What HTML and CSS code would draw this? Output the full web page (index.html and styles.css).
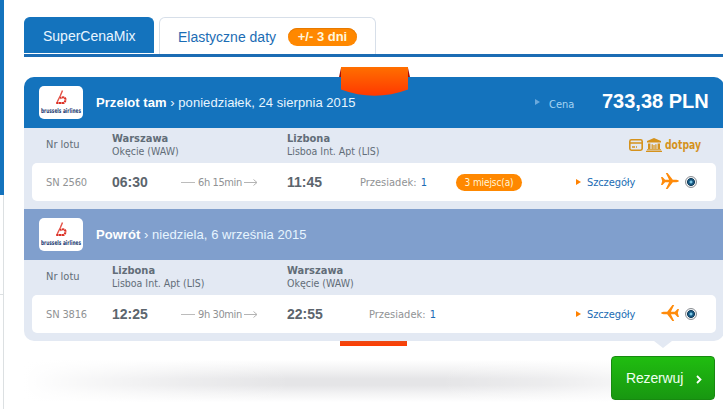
FILE: index.html
```html
<!DOCTYPE html>
<html lang="pl">
<head>
    <meta charset="utf-8">
    <title>Wyniki lotów</title>
    <link rel="stylesheet" href="styles.css">
</head>
<body>
    <svg width="0" height="0" class="defs">
        <symbol id="plane" viewBox="0 0 18 16">
            <path d="M0 4h1.5l2.6 2.8h4L4.8 0h1.8l5.2 6.8h3.6q2.4.5 2.6 1.2-.2.7-2.6 1.2h-3.6L6.6 16H4.8l3.3-6.8h-4L1.5 12H0l1.2-4z"/>
        </symbol>
        <symbol id="arrow" viewBox="0 0 14 8">
            <path d="M0 4.5h13M9.5 1.5l3.5 3-3.5 3" fill="none" stroke="#b4b4b4"/>
        </symbol>
        <symbol id="airline" viewBox="0 0 44 33">
            <path d="M23.5 4.5l-2.3 5.5-3 6" fill="none" stroke="#e4574c" stroke-width="1.5"/>
            <path d="M17.2 17h7.4q3-2.8 1.4-4.8-2-1.8-4.8.2" fill="none" stroke="#dc3025" stroke-width="2" stroke-dasharray="2.4 .4"/>
            <text x="2" y="27" textLength="40" lengthAdjust="spacingAndGlyphs">brussels airlines</text>
        </symbol>
    </svg>

    <div class="page">
        <div class="sidebar">
            <div class="sidebar-top"></div>
            <div class="sidebar-cell"></div>
            <div class="sidebar-rest"></div>
        </div>

        <div class="content">
            <div class="tabs">
                <div class="tab active"><span>SuperCenaMix</span></div>
                <div class="tab"><span class="tab-two">Elastyczne daty</span><b class="days">+/- 3 dni</b></div>
            </div>

            <div class="offer">
                <svg class="ribbon" width="72" height="30">
                    <defs>
                        <linearGradient id="rib" x2="0" y2="1"><stop stop-color="#ff6f00"/><stop offset="1" stop-color="#ff3800"/></linearGradient>
                    </defs>
                    <path d="M0 10L2 1h67l2 9z" fill="#a51008"/>
                    <path d="M2 0h67v22.5Q35.5 35 2 22.5z" fill="url(#rib)"/>
                </svg>

                <div class="head">
                    <svg class="logo"><use href="#airline"/></svg>
                    <div class="title"><b>Przelot tam</b> › poniedziałek, 24 sierpnia 2015</div>
                    <i class="tri pale"></i>
                    <span class="price-label">Cena</span>
                    <strong class="price">733,38 PLN</strong>
                </div>
                <div class="places">
                    <span class="nr">Nr lotu</span>
                    <div class="place"><b>Warszawa</b><span>Okęcie (WAW)</span></div>
                    <div class="place"><b>Lizbona</b><span>Lisboa Int. Apt (LIS)</span></div>
                    <div class="pay">
                        <svg width="14" height="12" fill="none" stroke="#d5921c" stroke-width="1.6"><rect x=".8" y=".8" width="12.4" height="10.4" rx="1.6"/><path d="M1 4h12M3 8h3M7 8h1"/></svg>
                        <svg width="16" height="14" fill="#d5921c"><path d="M8 0l7 3v1.6H1V3zM2 5.4h2.4V11H2zM11.6 5.4H14V11h-2.4zM5.6 6.2h1.2V11H5.6zM7.4 7h1.2v4H7.4zM9.3 6.2h1.2V11H9.3zM1 11.2h14v1H1zM0 12.8h16V14H0z"/></svg>
                        <svg width="40" height="22"><text class="dotpay" x="0" y="14.5" textLength="36" lengthAdjust="spacingAndGlyphs">dotpay</text></svg>
                    </div>
                </div>
                <div class="flight">
                    <span class="number">SN 2560</span>
                    <b class="time">06:30</b>
                    <span class="duration"><i></i><span>6h 15min</span><svg width="14" height="8"><use href="#arrow"/></svg></span>
                    <b class="time">11:45</b>
                    <span class="stops">Przesiadek: <em>1</em></span>
                    <span class="seats">3 miejsc(a)</span>
                    <a class="details"><i class="tri"></i>Szczegóły</a>
                    <svg class="plane" width="18" height="16"><use href="#plane"/></svg>
                    <span class="radio"></span>
                </div>

                <div class="head back">
                    <svg class="logo"><use href="#airline"/></svg>
                    <div class="title"><b>Powrót</b> › niedziela, 6 września 2015</div>
                </div>
                <div class="places">
                    <span class="nr">Nr lotu</span>
                    <div class="place"><b>Lizbona</b><span>Lisboa Int. Apt (LIS)</span></div>
                    <div class="place"><b>Warszawa</b><span>Okęcie (WAW)</span></div>
                </div>
                <div class="flight">
                    <span class="number">SN 3816</span>
                    <b class="time">12:25</b>
                    <span class="duration"><i></i><span>9h 30min</span><svg width="14" height="8"><use href="#arrow"/></svg></span>
                    <b class="time">22:55</b>
                    <span class="stops stops-back">Przesiadek: <em>1</em></span>
                    <span></span>
                    <a class="details"><i class="tri"></i>Szczegóły</a>
                    <svg class="plane plane-back" width="18" height="16"><use href="#plane"/></svg>
                    <span class="radio"></span>
                </div>
                <div class="notch"></div>
            </div>

            <div class="footer">
                <div class="next-ribbon"></div>
                <div class="shadow"></div>
                <button class="book"><span>Rezerwuj</span><svg width="6" height="9"><path d="M1 1l3.5 3.5L1 8" fill="none" stroke="#fff" stroke-width="1.8"/></svg></button>
            </div>
        </div>
    </div>
</body>
</html>
```
FILE: styles.css
```css
* { box-sizing: border-box; }
body {
    margin: 0;
    height: 409px;
    overflow: hidden;
    background: #fff;
    color: #626d78;
    font: 11px/13px "DejaVu Sans Condensed", "DejaVu Sans", sans-serif;
    font-stretch: condensed;
}
i, em { font-style: normal; }
.defs { position: absolute; }
.page { display: flex; height: 409px; }

.sidebar { width: 4px; margin-right: 20px; flex: none; }
.sidebar-top { height: 195px; background: #1473bd; }
.sidebar-cell { height: 100px; border-right: 1px solid #dce0e2; border-bottom: 1px solid #dce0e2; }
.sidebar-rest { height: 114px; border-right: 1px solid #dce0e2; }

.content { width: 700px; flex: none; padding-top: 17px; }
.tabs { display: flex; gap: 5px; height: 40px; border-bottom: 3px solid #1b6cb4; }
.tab {
    display: flex;
    align-items: center;
    width: 217px;
    height: 37px;
    padding: 1px 18px 0;
    border: 1px solid #d7dfe9;
    border-bottom: none;
    border-radius: 6px 6px 0 0;
    color: #1b6cb4;
    font: 14px/18px "Liberation Sans", Arial, sans-serif;
    white-space: nowrap;
}
.tab.active { width: 130px; height: 36px; background: #1473bd; border-color: #1473bd; color: #e8f5ff; }
.tab-two { width: 110px; }
.days {
    width: 69px;
    height: 18px;
    border-radius: 9px;
    background: #ff8800;
    box-shadow: inset 0 1px 1px #e57900;
    color: #fff6dd;
    text-align: center;
    font-size: 13px;
    line-height: 17px;
}

.offer { position: relative; height: 264px; margin-top: 20px; padding-bottom: 8px; border-radius: 10px; background: #e3e9f3; }
.ribbon { position: absolute; left: 315px; top: -10px; }
.head {
    display: flex;
    align-items: center;
    height: 51px;
    padding-left: 15px;
    border-radius: 10px 10px 0 0;
    background: #1473bd;
    color: #fff;
}
.head.back { margin-top: 8px; border-radius: 0; background: #809fcd; }
.logo { width: 44px; height: 33px; margin-right: 13px; border-radius: 5px; background: #fff; }
#airline text { font: bold 6.5px "DejaVu Sans", sans-serif; fill: #20386f; }
.title { width: 439px; font: 13px/18px "Liberation Sans", Arial, sans-serif; letter-spacing: .05px; white-space: nowrap; color: #e7f5ff; }
.title b { color: #fff; }
.tri { width: 0; height: 0; border: solid transparent; border-width: 3px 0 3px 5px; border-left-color: #ff8100; }
.tri.pale { border-left-color: #6ba9dd; margin-top: -2px; }
.price-label { width: 53px; margin: 3px 0 0 9px; color: #a5d3f3; }
.price { font: bold 20px/24px "Liberation Sans", Arial, sans-serif; margin-top: -4px; white-space: nowrap; }

.places { display: flex; height: 35px; padding: 5px 0 0 22px; line-height: 12px; }
.nr { width: 66px; padding-top: 6px; }
.place { width: 175px; white-space: nowrap; }
.place b, .place span { display: block; }
.place span { font-size: 10.5px; }
.pay { display: flex; align-items: center; gap: 3px; height: 24px; margin-left: 167px; }
.dotpay { font: bold 13px "DejaVu Sans", sans-serif; fill: #d5921c; }

.flight {
    display: grid;
    grid-template-columns: 66px 69px 106px 73px 96px 120px 85px 24px 14px;
    align-items: center;
    height: 38px;
    margin: 0 8px;
    padding-left: 14px;
    border-radius: 5px;
    background: #fff;
    color: #909294;
    white-space: nowrap;
}
.number { letter-spacing: -.15px; }
.time { font: bold 14px/18px "Liberation Sans", Arial, sans-serif; color: #5c656d; }
.duration { display: flex; align-items: center; }
.duration i { width: 14px; height: 1px; margin-right: 3px; background: #bcbcbc; }
.duration > span { width: 46px; letter-spacing: -.4px; }
.stops em { margin-left: 1px; color: #1b6cb4; }
.stops-back { padding-left: 9px; }
.seats { width: 66px; height: 17px; border-radius: 9px; background: #ff8800; color: #fff5d9; text-align: center; font-size: 10px; line-height: 17px; letter-spacing: -.1px; }
.details { display: flex; align-items: center; gap: 6px; color: #1b6cb4; letter-spacing: -.1px; }
.plane { margin-top: -3px; fill: #ff8b0a; }
.plane-back { transform: scaleX(-1); }
.radio {
    width: 12px;
    height: 12px;
    border: 1px solid #8b8f94;
    border-radius: 50%;
    background: radial-gradient(circle at 50% 50%, #7cc9e8 0 .8px, #16567f 2px 3px, #123b58 3.6px, #f0f2f4 4.3px);
}
.notch { position: absolute; left: 630px; top: 264px; border: solid transparent; border-width: 7px 9px 0; border-top-color: #e3e9f3; }

.footer { position: relative; height: 68px; }
.next-ribbon { width: 67px; height: 5px; margin-left: 316px; background: linear-gradient(#eb4a16, #ff3b00); }
.shadow {
    width: 670px;
    height: 42px;
    margin-top: 14px;
    background:
        linear-gradient(90deg, #fff 0, rgba(255,255,255,.75) 8%, rgba(255,255,255,.3) 24%, transparent 40%, transparent 62%, rgba(255,255,255,.3) 78%, #fff 100%),
        linear-gradient(#fff, #f1f1f2 26%, #e5e5e7 45%, #e5e5e7 60%, #f3f3f4 80%, #fff);
}
.book {
    position: absolute;
    left: 587px;
    top: 15px;
    display: flex;
    align-items: center;
    width: 104px;
    height: 44px;
    padding: 0 0 1px 14px;
    border: 1px solid #178a10;
    border-radius: 4px;
    background: linear-gradient(#20bd10, #189711);
    color: #effff0;
    font: 14px/18px "Liberation Sans", Arial, sans-serif;
}
.book span { width: 70px; text-align: left; letter-spacing: -.15px; }
.book svg { margin-top: 3px; }
```
